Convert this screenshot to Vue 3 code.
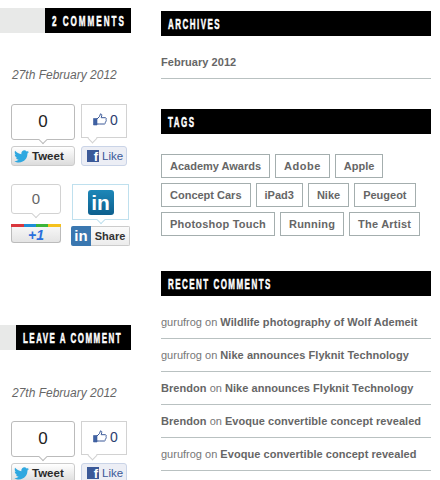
<script setup>
const tags = [
  ['Academy Awards', 'Adobe', 'Apple'],
  ['Concept Cars', 'iPad3', 'Nike', 'Peugeot'],
  ['Photoshop Touch', 'Running', 'The Artist'],
]
const comments = [
  { who: 'gurufrog', link: false, post: 'Wildlife photography of Wolf Ademeit' },
  { who: 'gurufrog', link: false, post: 'Nike announces Flyknit Technology' },
  { who: 'Brendon', link: true, post: 'Nike announces Flyknit Technology' },
  { who: 'Brendon', link: true, post: 'Evoque convertible concept revealed' },
  { who: 'gurufrog', link: false, post: 'Evoque convertible concept revealed' },
]
</script>

<template>
  <div class="page">
    <div class="left">
      <section class="post">
        <div class="post-head"><h2 class="bar bar-short"><span class="cond">2 Comments</span></h2></div>
        <p class="date">27th February 2012</p>
        <div class="row">
          <div class="tw">
            <div class="tw-count">0</div>
            <div class="tw-btn">
              <svg class="tw-bird" viewBox="0 0 16 14"><path d="M16 2c-.6.3-1.200.4-1.900.5.700-.4 1.200-1 1.400-1.800-.6.400-1.300.6-2 .8C12.900.8 12 .4 11.100.4 9.300.4 7.800 1.900 7.800 3.700c0 .3 0 .5.100.8C5.200 4.300 2.800 3 1.100.9.800 1.400.7 2 .7 2.600c0 1.100.6 2.100 1.500 2.700-.5 0-1-.2-1.500-.4 0 1.600 1.100 2.900 2.600 3.200-.5.100-1 .2-1.500.1.400 1.300 1.600 2.200 3.100 2.300C3.700 11.600 2 12.200.2 12c1.500.9 3.200 1.500 5 1.500 6 0 9.400-5 9.200-9.600.7-.5 1.200-1.100 1.600-1.900z"/></svg>
              <span>Tweet</span>
            </div>
          </div>
          <div class="fb">
            <div class="fb-count">
              <svg class="thumb" viewBox="0 0 14 13"><path class="thumb-fill" d="M.5 5.500h3.500v6.500H.5z"/><path class="thumb-line" d="M4 6l2.500-2.500L7.500.8c1 0 1.500 1 1.200 2L8.200 4.700h4c1 0 1.300 1 .8 1.600.5.500.4 1.300-.2 1.700.3.600.1 1.200-.5 1.500.2.800-.2 1.500-1 1.500H6.500L4 11"/></svg>
              <span>0</span>
            </div>
            <div class="fb-btn"><span class="fb-logo">f</span><span>Like</span></div>
          </div>
        </div>
        <div class="row row-second">
          <div class="gp">
            <div class="gp-count">0</div>
            <div class="gp-btn"><i class="gp-stripe"></i><span>+1</span></div>
          </div>
          <div class="li">
            <div class="li-count"><span class="li-logo">in</span></div>
            <div class="li-btn"><span class="li-mark">in</span><span class="li-text">Share</span></div>
          </div>
        </div>
      </section>

      <section class="post post-second">
        <div class="post-head"><h2 class="bar bar-long"><span class="cond">Leave a Comment</span></h2></div>
        <p class="date">27th February 2012</p>
        <div class="row">
          <div class="tw">
            <div class="tw-count">0</div>
            <div class="tw-btn">
              <svg class="tw-bird" viewBox="0 0 16 14"><path d="M16 2c-.6.3-1.200.4-1.900.5.700-.4 1.200-1 1.400-1.800-.6.400-1.300.6-2 .8C12.900.8 12 .4 11.100.4 9.300.4 7.800 1.900 7.800 3.700c0 .3 0 .5.100.8C5.200 4.300 2.800 3 1.100.9.800 1.400.7 2 .7 2.600c0 1.100.6 2.100 1.500 2.700-.5 0-1-.2-1.500-.4 0 1.600 1.100 2.900 2.600 3.200-.5.100-1 .2-1.500.1.400 1.300 1.600 2.200 3.100 2.300C3.700 11.600 2 12.200.2 12c1.500.9 3.200 1.500 5 1.500 6 0 9.400-5 9.200-9.600.7-.5 1.200-1.100 1.600-1.900z"/></svg>
              <span>Tweet</span>
            </div>
          </div>
          <div class="fb">
            <div class="fb-count">
              <svg class="thumb" viewBox="0 0 14 13"><path class="thumb-fill" d="M.5 5.500h3.500v6.500H.5z"/><path class="thumb-line" d="M4 6l2.500-2.500L7.500.8c1 0 1.500 1 1.200 2L8.200 4.700h4c1 0 1.300 1 .8 1.600.5.500.4 1.300-.2 1.700.3.600.1 1.200-.5 1.500.2.800-.2 1.500-1 1.500H6.500L4 11"/></svg>
              <span>0</span>
            </div>
            <div class="fb-btn"><span class="fb-logo">f</span><span>Like</span></div>
          </div>
        </div>
      </section>
    </div>

    <aside class="right">
      <section class="widget">
        <h3 class="wbar"><span class="cond">Archives</span></h3>
        <ul class="list">
          <li class="item"><b>February 2012</b></li>
        </ul>
      </section>
      <section class="widget">
        <h3 class="wbar"><span class="cond">Tags</span></h3>
        <div class="tags">
          <div v-for="(line, i) in tags" :key="i" class="tag-line">
            <span v-for="t in line" :key="t" class="tag">{{ t }}</span>
          </div>
        </div>
      </section>
      <section class="widget">
        <h3 class="wbar"><span class="cond">Recent Comments</span></h3>
        <ul class="list">
          <li v-for="(c, i) in comments" :key="i" class="item">
            <b v-if="c.link">{{ c.who }}</b><template v-else>{{ c.who }}</template> on <b>{{ c.post }}</b>
          </li>
        </ul>
      </section>
    </aside>
  </div>
</template>

<style>
html, body { margin: 0; padding: 0; background: #fff; overflow: hidden; }
</style>

<style scoped>
.page {
  width: 440px;
  height: 480px;
  overflow: hidden;
  display: flex;
  gap: 30px;
  font-family: "Liberation Sans", Arial, sans-serif;
  color: #666;
}
.left { width: 131px; padding-top: 8px; flex: none; }
.right { width: 270px; padding-top: 11px; flex: none; }

.post-head { background: #e8e9e8; display: flex; justify-content: flex-end; height: 25px; }
.bar, .wbar {
  box-sizing: border-box;
  margin: 0;
  background: #000;
  color: #fff;
  height: 25px;
  line-height: 26px;
  padding-left: 7px;
  font-size: 14px;
  font-weight: 700;
  text-transform: uppercase;
  white-space: nowrap;
}
.bar-short { width: 86px; }
.bar-long { width: 115px; }
.cond {
  display: inline-block;
  letter-spacing: 2.6px;
  -webkit-text-stroke: .5px #fff;
  transform: scaleX(.57);
  transform-origin: left center;
}
.bar-short .cond { letter-spacing: 3.4px; transform: scaleX(.58); }
.bar-long .cond { letter-spacing: 2.6px; transform: scaleX(.57); }

.date { margin: 34px 0 0; font-size: 12px; line-height: 16px; font-style: italic; color: #666; padding-left: 12px; }

.post-second { margin-top: 79px; }
.post-second .date { margin-top: 35px; }
.post-second .row { margin-top: 20px; }

.row { display: flex; padding-left: 11px; margin-top: 21px; }
.row-second { margin-top: 18px; }

.tw { width: 64px; }
.tw-count {
  position: relative;
  box-sizing: border-box;
  width: 64px;
  height: 36px;
  border: 1px solid #bbb;
  border-radius: 3px;
  font-size: 17px;
  line-height: 34px;
  text-align: center;
  color: #222;
}
.tw-count::after, .gp-count::after, .fb-count::after, .li-count::after {
  content: "";
  position: absolute;
  left: 50%;
  bottom: -4px;
  width: 5px;
  height: 5px;
  margin-left: -3px;
  background: #fff;
  border-right: 1px solid #bbb;
  border-bottom: 1px solid #bbb;
  transform: rotate(45deg);
}
.tw-btn {
  box-sizing: border-box;
  margin-top: 6px;
  width: 64px;
  height: 20px;
  border: 1px solid #ccc;
  border-radius: 3px;
  background: linear-gradient(#fff, #dcdcdc);
  display: flex;
  align-items: center;
  padding-left: 2px;
  gap: 3px;
  font-size: 11.5px;
  font-weight: 700;
  color: #2a2a2a;
}
.tw-bird { width: 15px; height: 13px; fill: #2fa8e0; }

.fb { width: 46px; margin-left: 6px; }
.fb-count {
  position: relative;
  box-sizing: border-box;
  width: 46px;
  height: 34px;
  border: 1px solid #d2d2d2;
  display: flex;
  align-items: flex-start;
  padding: 8px 0 0 11px;
  gap: 3px;
  font-size: 14px;
  line-height: 15px;
  color: #2c3e70;
}
.fb-count::after { left: 7px; margin-left: 0; border-color: #d2d2d2; bottom: -5px; width: 6px; height: 6px; }
.thumb { width: 14px; height: 13px; }
.thumb-fill { fill: #3f62a4; stroke: #3b5998; stroke-width: .6; }
.thumb-line { fill: none; stroke: #3b5998; stroke-width: 1; }
.fb-btn {
  box-sizing: border-box;
  margin-top: 8px;
  width: 46px;
  height: 20px;
  border: 1px solid #cad4e7;
  border-radius: 3px;
  background: #eceef5;
  display: flex;
  align-items: center;
  padding-left: 5px;
  gap: 3px;
  font-size: 11.5px;
  color: #3b5998;
}
.fb-logo {
  width: 12px;
  height: 12px;
  background: #3b5998;
  color: #fff;
  font-weight: 700;
  font-size: 13px;
  line-height: 13px;
  text-align: right;
  padding-right: 1px;
  box-sizing: border-box;
}

.gp { width: 50px; }
.gp-count {
  position: relative;
  box-sizing: border-box;
  width: 50px;
  height: 30px;
  border: 1px solid #d2d2d2;
  border-radius: 3px;
  font-size: 15px;
  line-height: 28px;
  text-align: center;
  color: #666;
}
.gp-count::after { border-color: #d2d2d2; }
.gp-btn {
  position: relative;
  box-sizing: border-box;
  margin-top: 10px;
  width: 50px;
  height: 19px;
  border: 1px solid #bbb;
  border-top: 0;
  border-radius: 0 0 3px 3px;
  background: linear-gradient(#fafafa, #e4e4e4);
  text-align: center;
  font-size: 14px;
  line-height: 16px;
  font-weight: 700;
  font-style: italic;
  color: #2a6fdc;
  padding-top: 3px;
}
.gp-stripe {
  position: absolute;
  left: -1px;
  right: -1px;
  top: 0;
  height: 3px;
  background: linear-gradient(90deg, #d9363c 0 25%, #1f8ed6 25% 50%, #3db53a 50% 75%, #f5c11c 75%);
}

.li { width: 59px; margin-left: 10px; }
.li-count {
  position: relative;
  box-sizing: border-box;
  width: 57px;
  height: 36px;
  margin-left: 1px;
  border: 1px solid #bfe0ee;
  display: flex;
  align-items: center;
  justify-content: center;
}
.li-count::after { border-color: #bfe0ee; }
.li-logo {
  width: 26px;
  height: 25px;
  border-radius: 3px;
  background: linear-gradient(#1d87b8, #0d5f8e);
  color: #fff;
  font-size: 21px;
  line-height: 26px;
  font-weight: 700;
  text-align: center;
}
.li-btn {
  box-sizing: border-box;
  margin-top: 6px;
  width: 59px;
  height: 20px;
  display: flex;
  align-items: stretch;
  border-radius: 2px;
  overflow: hidden;
}
.li-mark {
  width: 20px;
  background: #3a77b0;
  color: #fff;
  font-size: 15px;
  line-height: 19px;
  font-weight: 700;
  text-align: center;
}
.li-text {
  flex: 1;
  border: 1px solid #ccc;
  border-left: 0;
  background: linear-gradient(#fbfbfb, #ececec);
  font-size: 11px;
  line-height: 18px;
  font-weight: 700;
  color: #333;
  text-align: center;
}

.widget { margin-bottom: 30px; }
.widget:nth-child(2) { margin-bottom: 35px; }
.list { list-style: none; margin: 0; padding: 10px 0 0; }
.item {
  height: 33px;
  box-sizing: border-box;
  padding-top: 9px;
  line-height: 15px;
  font-size: 11px;
  color: #777;
  border-bottom: 1px solid #b9c1c1;
  white-space: nowrap;
}
.item b { color: #666; letter-spacing: .05px; }

.tags { padding-top: 20px; }
.tag-line { display: flex; gap: 5px; margin-bottom: 5px; }
.tag {
  box-sizing: border-box;
  height: 24px;
  line-height: 22px;
  padding: 0 8px;
  border: 1px solid #a4aeae;
  font-size: 11px;
  font-weight: 700;
  color: #666;
}
.tag-line:nth-child(1) .tag:nth-child(2) { letter-spacing: .5px; }
.tag-line:nth-child(3) .tag { letter-spacing: .22px; }
</style>
